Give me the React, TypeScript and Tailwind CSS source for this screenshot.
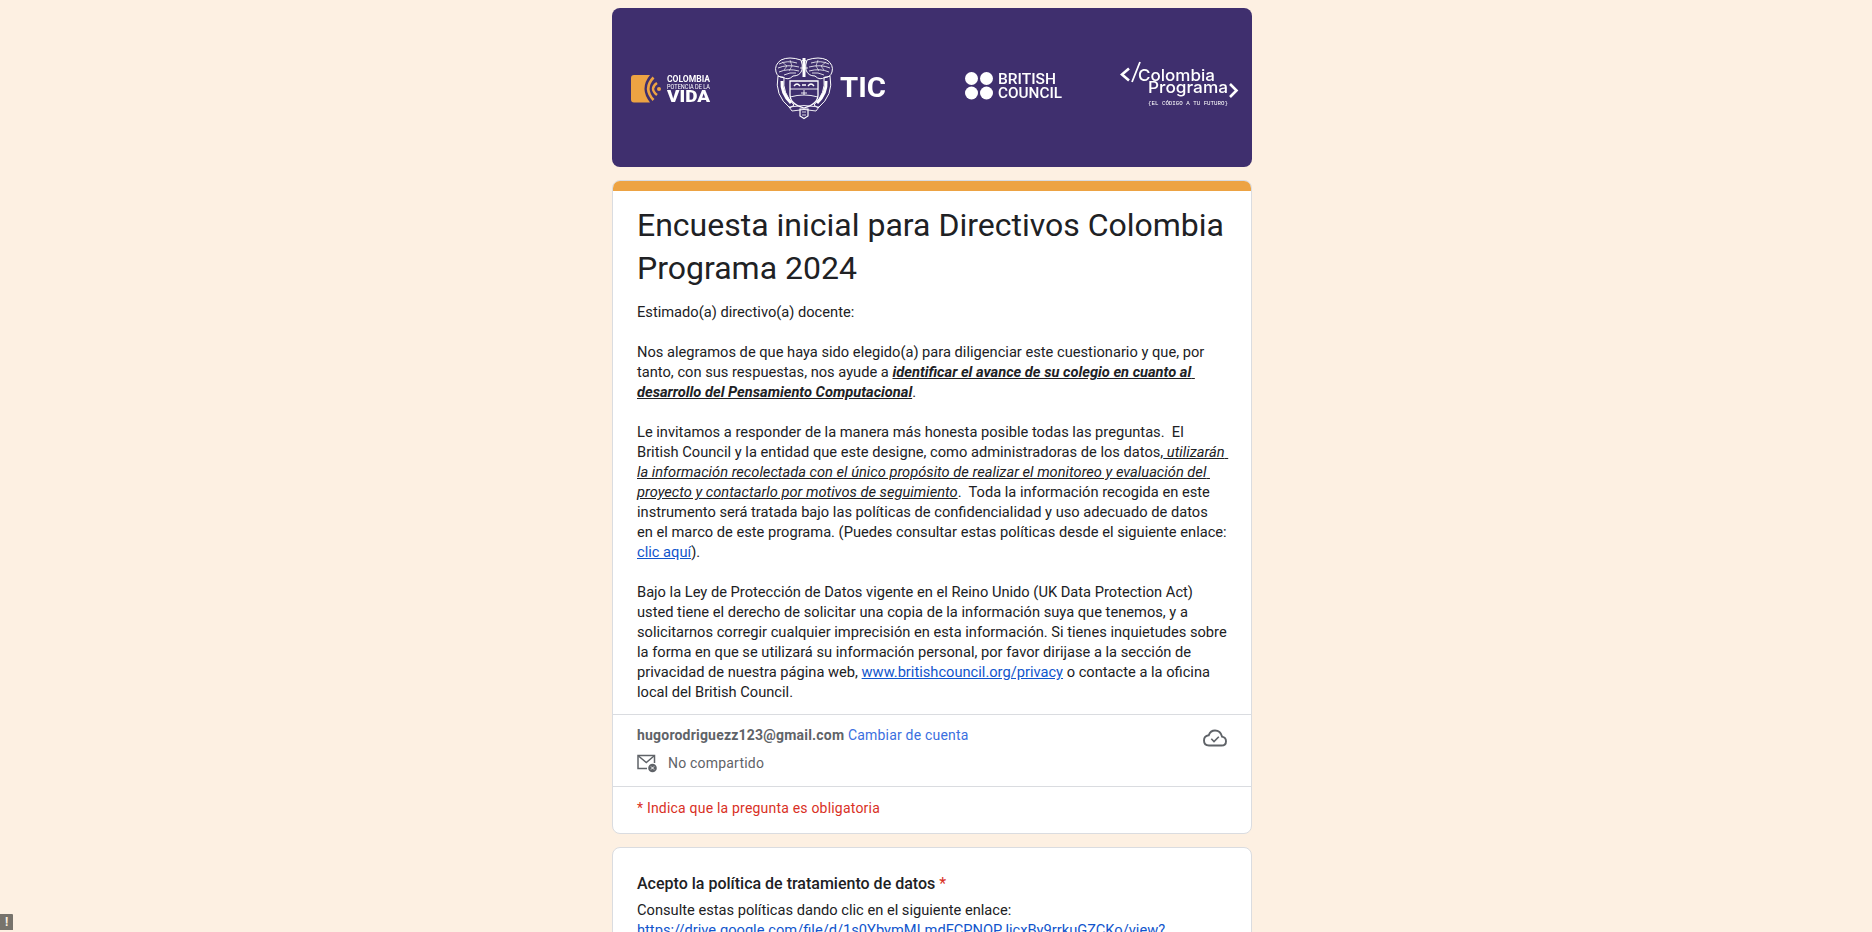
const roboto = "font-['Roboto',_'Liberation_Sans',_sans-serif]"

function VidaLogo() {
    return (
        <svg className="mt-[3px] overflow-visible blur-[0.3px]" width="80" height="28" viewBox="0 0 80 28">
            <path d="M3 0H19Q8 13.500 19 27.500H3Q0 27.500 0 24.500V3Q0 0 3 0Z" fill="#eda343" />
            <path d="M22.500 2.500Q12 13.500 22.500 25" fill="none" stroke="#eda343" strokeWidth="2.600" />
            <path d="M26 8Q18 13.500 26 20" fill="none" stroke="#eda343" strokeWidth="2.400" />
            <circle cx="28" cy="14" r="2" fill="#eda343" />
            <text x="36" y="7" fill="#fff" fontSize="8.500" fontWeight="700" fontFamily="Roboto, sans-serif" textLength="43" lengthAdjust="spacingAndGlyphs">COLOMBIA</text>
            <text x="36" y="14" fill="#fff" fontSize="6.500" fontFamily="Roboto, sans-serif" textLength="43" lengthAdjust="spacingAndGlyphs">POTENCIA DE LA</text>
            <text x="36" y="27" fill="#fff" fontSize="16" fontWeight="900" fontFamily="Roboto, sans-serif" textLength="43" lengthAdjust="spacingAndGlyphs">VIDA</text>
        </svg>
    )
}

function TicLogo() {
    return (
        <svg className="overflow-visible blur-[0.3px]" width="112" height="62" viewBox="0 0 112 62" fill="none" stroke="#fff">
            {/* escudo */}
            <path d="M26 3Q14 -1 6 3Q-1 8 1 15Q3 21 8 20Q13 24 18 19Q25 19 27 13Q28 8 26 3Z" strokeWidth="1" />
            <path d="M32 3Q44 -1 52 3Q59 8 57 15Q55 21 50 20Q45 24 40 19Q33 19 31 13Q30 8 32 3Z" strokeWidth="1" />
            <path d="M4 7Q12 3 22 6M3 11Q12 7 24 10M4 15Q13 11 24 14M9 18Q15 15 21 16M54 7Q46 3 36 6M55 11Q46 7 34 10M54 15Q45 11 34 14M49 18Q43 15 37 16" strokeWidth="0.800" />
            <path d="M7 5L12 9L9 13M15 3L17 9L14 14M51 5L46 9L49 13M43 3L41 9L44 14" strokeWidth="0.600" />
            <path d="M29 1V20" strokeWidth="3" />
            <path d="M26 5L29 2L32 5M25 11H33" strokeWidth="0.800" />
            <path d="M15 24H43V38Q43 47 29 51Q15 47 15 38Z" strokeWidth="1.300" />
            <path d="M15 32H43M15 40Q29 36 43 40" strokeWidth="0.900" />
            <path d="M19 29Q22 25 25 29M33 29Q36 25 39 29M27 28H31" strokeWidth="1.300" />
            <path d="M29 33V38M26 36H32" strokeWidth="0.900" />
            <path d="M3 19Q-1 38 15 51L19 48Q7 36 9 21Z" strokeWidth="1" />
            <path d="M55 19Q59 38 43 51L39 48Q51 36 49 21Z" strokeWidth="1" />
            <path d="M7 24Q6 36 16 46M51 24Q52 36 42 46" strokeWidth="3" />
            <path d="M14 50Q29 47 44 50L41 54Q29 51 17 54Z" strokeWidth="0.900" />
            <path d="M25 52H33V59L29 61.500L25 59Z" strokeWidth="1.200" />
            <path d="M27 55H31M27 58H31" strokeWidth="0.800" />
            <text x="65" y="40" fill="#fff" stroke="none" fontSize="27" fontWeight="700" fontFamily="Roboto, sans-serif" textLength="46" lengthAdjust="spacingAndGlyphs">TIC</text>
        </svg>
    )
}

function BritishLogo() {
    return (
        <svg className="overflow-visible blur-[0.3px]" width="97" height="28" viewBox="0 0 97 28" fill="#fff">
            <circle cx="6.500" cy="6.500" r="6.500" />
            <circle cx="21.500" cy="6.500" r="6.500" />
            <circle cx="6.500" cy="21" r="6.500" />
            <circle cx="21.500" cy="21" r="6.500" />
            <text x="33" y="12" fontSize="15.500" fontWeight="500" fontFamily="Roboto, sans-serif" textLength="58" lengthAdjust="spacingAndGlyphs">BRITISH</text>
            <text x="33" y="26" fontSize="15.500" fontWeight="500" fontFamily="Roboto, sans-serif" textLength="64" lengthAdjust="spacingAndGlyphs">COUNCIL</text>
        </svg>
    )
}

function ProgramaLogo() {
    return (
        <svg className="overflow-visible blur-[0.3px]" width="118" height="46" viewBox="0 0 118 46" fill="none">
            <path d="M9 6.500L2 12.500L9 18.500" stroke="#fff" strokeWidth="2.600" />
            <path d="M20 0L12 20" stroke="#fff" strokeWidth="1.800" />
            <text x="18" y="19" fill="#fff" fontSize="16.500" fontWeight="500" fontFamily="Inter, sans-serif" textLength="77" lengthAdjust="spacingAndGlyphs">Colombia</text>
            <text x="28" y="31" fill="#fff" fontSize="16.500" fontWeight="500" fontFamily="Inter, sans-serif" textLength="80" lengthAdjust="spacingAndGlyphs">Programa</text>
            <path d="M110 22L116.500 28.500L110 35" stroke="#fff" strokeWidth="2.600" />
            <text x="28" y="43" fill="#fff" fontSize="6" fontFamily="Liberation Mono, monospace" textLength="80" lengthAdjust="spacingAndGlyphs">{"{EL CÓDIGO A TU FUTURO}"}</text>
        </svg>
    )
}

export default function App() {
    return (
        <div className={`h-screen overflow-hidden bg-[#fdf0e2] pr-2 ${roboto}`}>
            <div className="mx-auto w-[640px] pt-2">
                <div className="flex h-[159px] items-center rounded-lg bg-[#3f2f6e] pl-[19px]">
                    <VidaLogo />
                    <div className="ml-[64px]"><TicLogo /></div>
                    <div className="ml-[78px] mt-[-3px]"><BritishLogo /></div>
                    <div className="ml-[58px] mt-[-5px]"><ProgramaLogo /></div>
                </div>

                <div className="mt-[13px] overflow-hidden rounded-lg border border-[#dadce0] bg-white">
                    <div className="mx-[-1px] mt-[-1px] h-[11px] bg-[#eda343]" />
                    <div className="px-6 pb-[12px]">
                        <h1 className="pt-[13px] text-[32px] leading-[43px] text-[#202124]">Encuesta inicial para Directivos Colombia Programa 2024</h1>
                        <div className="mt-[12px] whitespace-pre-wrap text-[14.67px] leading-[20px] text-[#202124]">
                            <p>Estimado(a) directivo(a) docente:</p>
                            <br />
                            <p>Nos alegramos de que haya sido elegido(a) para diligenciar este cuestionario y que, por tanto, con sus respuestas, nos ayude a <b className="italic underline">identificar el avance de su colegio en cuanto al desarrollo del Pensamiento Computacional</b>.</p>
                            <br />
                            <p>Le invitamos a responder de la manera más honesta posible todas las preguntas.  El British Council y la entidad que este designe, como administradoras de los datos,<span className="italic underline"> utilizarán la información recolectada con el único propósito de realizar el monitoreo y evaluación del proyecto y contactarlo por motivos de seguimiento</span>.  Toda la información recogida en este instrumento será tratada bajo las políticas de confidencialidad y uso adecuado de datos en el marco de este programa. (Puedes consultar estas políticas desde el siguiente enlace: <a className="text-[#1155cc] underline">clic aquí</a>).</p>
                            <br />
                            <p>Bajo la Ley de Protección de Datos vigente en el Reino Unido (UK Data Protection Act) usted tiene el derecho de solicitar una copia de la información suya que tenemos, y a solicitarnos corregir cualquier imprecisión en esta información. Si tienes inquietudes sobre la forma en que se utilizará su información personal, por favor dirijase a la sección de privacidad de nuestra página web, <a className="text-[#1155cc] underline">www.britishcouncil.org/privacy</a> o contacte a la oficina local del British Council.</p>
                        </div>
                    </div>

                    <div className="flex h-[72px] justify-between border-t border-[#dadce0] pl-6 pr-[24px] text-sm tracking-[0.2px] text-[#5f6368]">
                        <div>
                            <p className="mt-[10px] leading-[20px]"><b>hugorodriguezz123@gmail.com</b> <span className="text-[#3b6fe0]">Cambiar de cuenta</span></p>
                            <div className="mt-[8px] flex items-center gap-[11px]">
                                <svg width="20" height="20" viewBox="0 0 20 20" fill="none" stroke="#5f6368" strokeWidth="1.500">
                                    <path d="M10 15.500H1V2.500H17.500V10" />
                                    <path d="M1.500 3L9.300 9.500L17 3" />
                                    <circle cx="15.500" cy="15" r="4.300" fill="#5f6368" stroke="none" />
                                    <path d="M14 13.500L17 16.500M17 13.500L14 16.500" stroke="#fff" strokeWidth="1" />
                                </svg>
                                <span>No compartido</span>
                            </div>
                        </div>
                        <svg className="mt-[11px]" width="24" height="24" viewBox="0 0 24 24" fill="none" stroke="#5f6368" strokeWidth="1.900">
                            <path d="M6 19.500H18.500Q23 19.500 23 15.200Q23 11.300 19 10.600Q17.500 4.500 12 4.500Q7.500 4.500 5.700 9.300Q1 10 1 14.500Q1 19.500 6 19.500Z" />
                            <path d="M8.300 12.800L11 15.500L15.800 10.700" strokeWidth="1.600" />
                        </svg>
                    </div>

                    <div className="flex h-[47px] items-center border-t border-[#dadce0] px-6 pb-[5px] text-sm tracking-[0.2px] text-[#d93025]">* Indica que la pregunta es obligatoria</div>
                </div>

                <div className="mt-[13px] rounded-lg border border-[#dadce0] bg-white px-6 pt-[24px] text-[#202124]">
                    <p className="text-base font-medium leading-[24px]">Acepto la política de tratamiento de datos <span className="font-normal text-[#d93025]">*</span></p>
                    <p className="mt-[4px] text-[14.67px] leading-[20px]">Consulte estas políticas dando clic en el siguiente enlace:</p>
                    <a className="block text-[14.67px] leading-[20px] text-[#1155cc] underline">https://drive.google.com/file/d/1s0YbymMLmdFCPNOPJicxBy9rrkuGZCKo/view?</a>
                </div>
            </div>

            <div className="fixed bottom-[2px] left-0 flex h-4 w-[13px] items-center justify-center rounded-tr-[1px] bg-[#77736c] text-xs font-bold text-[#fdf0e2]">!</div>
        </div>
    )
}
